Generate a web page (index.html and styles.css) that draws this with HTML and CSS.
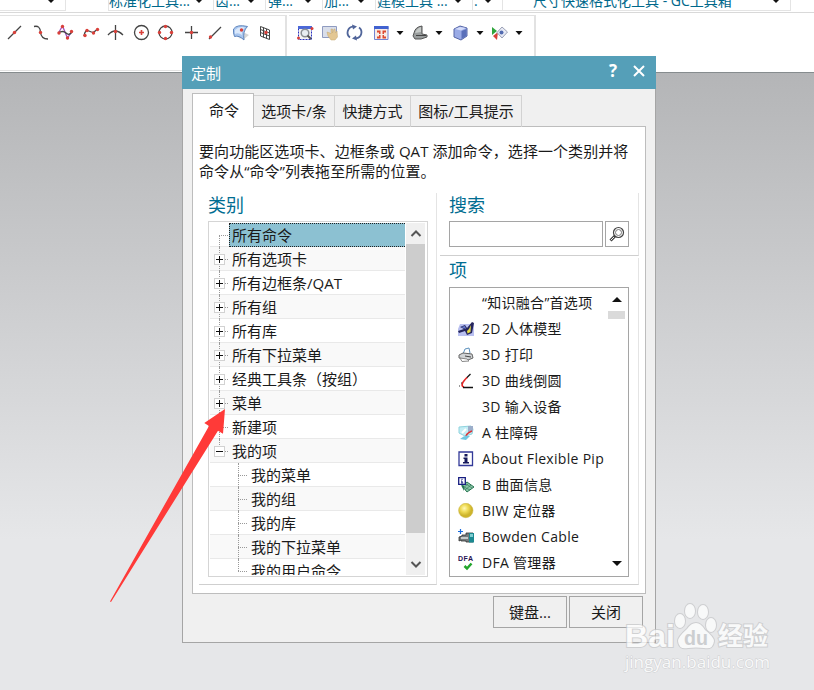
FILE: index.html
```html
<!DOCTYPE html>
<html lang="zh-CN">
<head>
<meta charset="UTF-8">
<meta name="viewport" content="width=device-width, initial-scale=1.0">
<title>定制</title>
<link rel="stylesheet" href="styles.css">
</head>
<body>

  <div class="ribbon">
    <div class="cell c1"><i class="down"></i></div>
    <div class="cell c2"><span>标准化工具...</span><i class="down"></i></div>
    <div class="cell c3"><span>齿...</span><i class="down"></i></div>
    <div class="cell c4"><span>弹...</span><i class="down"></i></div>
    <div class="cell c5"><span>加...</span><i class="down"></i></div>
    <div class="cell c6"><span>建模工具 ...</span><i class="down"></i></div>
    <div class="cell c7"><span>.</span><i class="down"></i></div>
    <div class="cell c8"><span>尺寸快速格式化工具 - GC工具箱</span><i class="down"></i></div>
  </div>

  <div class="toolbar">
    <div class="group curves">
      <svg viewBox="0 0 286 38">
        <g fill="none" stroke="#444" stroke-width="1.3">
          <path d="M9 24L22 11"/>
          <path d="M35 11.500Q41 10 41.500 17Q42 24 49 24"/>
          <path d="M60 17L63.500 11L68.500 23L73 16" stroke="#a050c0"/>
          <path d="M59 18Q64 15 67 18T73 17"/>
          <path d="M85 21Q86 14 90 16T95 17T99 14"/>
          <path d="M109 20Q116 12 124 20M116.500 10V25"/>
          <circle cx="142.500" cy="17.500" r="7"/>
          <circle cx="166.500" cy="17.500" r="6.500"/>
          <path d="M186 17.500H199M192.500 11V24"/>
          <path d="M210 24L222 12"/>
        </g>
        <g fill="#d9403a">
          <circle cx="15.500" cy="17.500" r="1.700"/>
          <circle cx="41.500" cy="17.500" r="1.700"/>
          <circle cx="60" cy="18" r="1.700"/><circle cx="63.500" cy="11.500" r="1.700"/><circle cx="68.500" cy="23" r="1.700"/><circle cx="72.500" cy="16.500" r="1.700"/>
          <circle cx="86" cy="20.500" r="1.700"/><circle cx="88" cy="15.500" r="1.700"/><circle cx="94.500" cy="18" r="1.700"/><circle cx="98.500" cy="14.500" r="1.700"/>
          <circle cx="116.500" cy="16.500" r="1.700"/>
          <path d="M141.700 15h1.600v1.700H145v1.600h-1.700V20h-1.600v-1.700H140v-1.600h1.700z"/>
          <circle cx="166.500" cy="11.500" r="1.700"/><circle cx="160.500" cy="17.500" r="1.700"/><circle cx="172.500" cy="17.500" r="1.700"/><circle cx="166.500" cy="23.500" r="1.700"/>
          <circle cx="192.500" cy="17.500" r="1.700"/>
          <circle cx="211.500" cy="22" r="1.700"/>
        </g>
        <path d="M246 18L250 20L245 24L239 23Z" fill="#d5d5d5"/>
        <path d="M234.500 14Q238 9 248.500 11.500Q243.500 16 245 25Q240 20 235.500 21.500Q234 18 234.500 14Z" fill="#a9c6ef" stroke="#6086bd"/>
        <path d="M236 15Q240 11 246 12.500Q242 16 243 20Q239 17 236 19Z" fill="#dbe9fb"/>
        <circle cx="242.500" cy="15" r="1.700" fill="#d9403a"/>
        <path d="M261.500 11.500L270.500 15V24.500L261.500 21ZM264.500 12.500V22.500M267.500 14V23.500M261.500 14.500L270.500 18M261.500 17.500L270.500 21" fill="none" stroke="#444"/>
        <circle cx="267" cy="17.500" r="1.700" fill="#d9403a"/>
      </svg>
    </div>
    <div class="group views">
      <svg viewBox="0 0 246 38">
        <path d="M10.500 11.500H23.500V24.500H10.500Z" fill="#f4f4f4" stroke="#2830c0" stroke-dasharray="2 1"/>
        <path d="M10 11H24V14H10Z" fill="#4b68d8"/>
        <circle cx="17" cy="18" r="3.800" fill="#e8eef2" stroke="#8a8f94" stroke-width="1.500"/>
        <path d="M19.500 20.500L23 24" stroke="#555" stroke-width="2"/>
        <circle cx="24" cy="13.500" r="1.500" fill="#d9403a"/><circle cx="10.500" cy="23" r="1.500" fill="#d9403a"/>
        <path d="M34.500 11.500H48.500V22.500H34.500Z" fill="#d9deea" stroke="#8f9bc0"/>
        <path d="M39 17L42 18L43 19V14H44.500V18L46 14H47L47.500 18L49 16L49.500 22L47 25H43L40 21Z" fill="#e3c793" stroke="#c4a873" stroke-width=".5"/>
        <g fill="none" stroke="#50659a" stroke-width="1.800">
          <path d="M62 22.500A6 6 0 0 1 65 11.700"/>
          <path d="M71 12.500A6 6 0 0 1 68 23.300"/>
        </g>
        <path d="M64 9.500L69 11.500L65 14.500ZM69 25.500L64 23.500L68 20.500Z" fill="#50659a"/>
        <path d="M86.500 11.500H100V24.500H86.500Z" fill="#f8ece6" stroke="#7384d2"/>
        <path d="M86 11H100.500V14H86Z" fill="#4162d0"/>
        <path d="M89 15.500H92.500V19H91V17.500H89ZM94.500 15.500H98V17.500H96V19H94.500ZM89 21.500H91V20H92.500V23.500H89ZM94.500 20H96V21.500H98V23.500H94.500Z" fill="#dd4a31"/>
        <path d="M108.500 16H115.500L112 20Z" fill="#111"/>
        <path d="M126 18Q127 12 134 11V19L139 20V22L133 24H127L125 21Z" fill="#999d9d" stroke="#555"/>
        <path d="M127 18Q129 13 133 12V17Z" fill="#c6cac8"/><path d="M128 20.500L138 20.500" stroke="#444"/>
        <path d="M147.500 16H154.500L151 20Z" fill="#111"/>
        <path d="M166 14L172 11L179 13V21L173 25L166 22Z" fill="#9aabe6" stroke="#5666a7"/>
        <path d="M167 14L172 12L178 13L173 15.500Z" fill="#d4dcfa"/><path d="M173.500 16L178.500 14V21L173.500 24Z" fill="#5a70ba"/>
        <path d="M188.500 16H195.500L192 20Z" fill="#111"/>
        <path d="M204 12L209 16L204 20Z" fill="#2fa53c"/><path d="M205 21L210 17L209 25Z" fill="#d9403a"/>
        <path d="M209 17.500L214 12L219.500 17L214 23Z" fill="#e7eaf5" stroke="#9aa0b5"/><circle cx="213.500" cy="17.500" r="2" fill="#536bb0"/>
        <path d="M227.500 16H234.500L231 20Z" fill="#111"/>
      </svg>
    </div>
  </div>

  <div class="dialog">
    <div class="title">
      <span>定制</span>
      <b>?</b>
      <svg viewBox="0 0 12 12"><path d="M1 1L11 11M11 1L1 11" stroke="#fff" stroke-width="2"/></svg>
    </div>
    <div class="tabs">
      <div class="tab active">命令</div>
      <div class="tab t2">选项卡/条</div>
      <div class="tab t3">快捷方式</div>
      <div class="tab t4">图标/工具提示</div>
    </div>
    <div class="panel">
      <p>要向功能区选项卡、边框条或 QAT 添加命令，选择一个类别并将<br>命令从“命令”列表拖至所需的位置。</p>
      <div class="columns">
        <div class="left">
          <h2>类别</h2>
          <div class="treebox">
            <ul class="tree">
              <li class="first"><span class="selected">所有命令</span></li>
              <li><i class="box plus"></i><span>所有选项卡</span></li>
              <li><i class="box plus"></i><span>所有边框条/QAT</span></li>
              <li><i class="box plus"></i><span>所有组</span></li>
              <li><i class="box plus"></i><span>所有库</span></li>
              <li><i class="box plus"></i><span>所有下拉菜单</span></li>
              <li><i class="box plus"></i><span>经典工具条（按组）</span></li>
              <li><i class="box plus"></i><span>菜单</span></li>
              <li><span>新建项</span></li>
              <li class="last"><i class="box"></i><span>我的项</span></li>
              <li class="child"><span>我的菜单</span></li>
              <li class="child"><span>我的组</span></li>
              <li class="child"><span>我的库</span></li>
              <li class="child"><span>我的下拉菜单</span></li>
              <li class="child end"><span>我的用户命令</span></li>
            </ul>
            <div class="scroll">
              <svg viewBox="0 0 20 21"><path d="M5.500 13L10 8.500L14.500 13" fill="none" stroke="#555" stroke-width="2"/></svg>
              <div class="thumb"></div>
              <svg viewBox="0 0 20 21"><path d="M5.500 8L10 12.500L14.500 8" fill="none" stroke="#555" stroke-width="2"/></svg>
            </div>
          </div>
        </div>
        <div class="right">
          <div class="search">
            <h2>搜索</h2>
            <div class="search-row">
              <input type="text">
              <button type="button" class="find">
                <svg viewBox="0 0 16 16"><path d="M1.500 14.500L6 10" stroke="#444" stroke-width="3"/><path d="M2 14L5 11" stroke="#eee"/><circle cx="9.500" cy="6.500" r="5" fill="#fff" stroke="#444" stroke-width="1.200"/><circle cx="9.500" cy="6.500" r="3" fill="#fff" stroke="#777"/></svg>
              </button>
            </div>
          </div>
          <div class="items">
            <h2>项</h2>
            <div class="list">
              <ul>
                <li><svg viewBox="0 0 16 16"></svg><span>“知识融合”首选项</span></li>
                <li>
                  <svg viewBox="0 0 16 16"><path d="M2 3H16V15H0V8Z" fill="#b9c0f0"/><path d="M2 6L7 4L9 7L14 1L16 2L14 12L9 14L7 10L1 12L0 10L6 8Z" fill="#26265c"/><path d="M9 10L11 8L13 4L12.500 11L9.500 12.500Z" fill="#e5dc45"/><path d="M3 6L7 5L8 8Z" fill="#647bd1"/></svg>
                  <span>2D 人体模型</span>
                </li>
                <li>
                  <svg viewBox="0 0 16 16"><path d="M5 7L7 2L11 1L12 6L10 8Z" fill="#fff" stroke="#5c91bd"/><path d="M1 8L5 6L14 7L15 11L10 13L1 11Z" fill="#d0d3d5" stroke="#666"/><path d="M2 11L9 12L11 14L4 14.500Z" fill="#fff" stroke="#888"/><path d="M7 9L13 10" stroke="#444"/></svg>
                  <span>3D 打印</span>
                </li>
                <li>
                  <svg viewBox="0 0 16 16"><path d="M12.500 1L8.500 5" stroke="#111" stroke-width="1.300"/><path d="M9 4.500Q1 12.500 6 14" fill="none" stroke="#e32626" stroke-width="1.700"/><path d="M5 14.500H15" stroke="#111" stroke-width="1.500"/><path d="M1 13H2M3 10H4" stroke="#333"/></svg>
                  <span>3D 曲线倒圆</span>
                </li>
                <li><svg viewBox="0 0 16 16"></svg><span>3D 输入设备</span></li>
                <li>
                  <svg viewBox="0 0 16 16"><path d="M1 2L13 1L15 4L14 9L7 11L1 8Z" fill="#c4eef5" stroke="#8fd3de"/><path d="M10 1H15V6L10 8Z" fill="#9caeca"/><path d="M14 6Q9 8 8 11" stroke="#d33" stroke-width="1.500" fill="none"/><path d="M2 14Q7 9 12 11L8 15Z" fill="#70c7e1"/><path d="M4 8L8 4" stroke="#fff" stroke-width="2"/></svg>
                  <span>A 柱障碍</span>
                </li>
                <li>
                  <svg viewBox="0 0 16 16"><path d="M1 1H14.500V14.500H1Z" fill="#fff" stroke="#333a99" stroke-width="1.300"/><path d="M6.500 3H9.500V5.500H6.500ZM5.500 6.500H9.500V11H11V12.500H5V11H6.500V8H5.500Z" fill="#15185b"/></svg>
                  <span>About Flexible Pip</span>
                </li>
                <li>
                  <svg viewBox="0 0 16 16"><path d="M4 9L9 5L16 10L9 15Z" fill="#8cc8aa" stroke="#287552"/><path d="M6 10L12 13M8 7L14 11M7 13L13 8M5 11L10 7" stroke="#387b5b" stroke-width=".7"/><path d="M3 8L6 14V9Z" fill="#287552"/><path d="M.7.700H7.300V7.300H.7Z" fill="#fff" stroke="#171e81" stroke-width="1.300"/><path d="M4 1.800V3M3 4H4V6M3 6H5.200" fill="none" stroke="#171e81"/></svg>
                  <span>B 曲面信息</span>
                </li>
                <li>
                  <svg viewBox="0 0 16 16"><defs><radialGradient id="ball" cx=".4" cy=".35"><stop offset="0" stop-color="#fff8b8"/><stop offset=".5" stop-color="#efdc58"/><stop offset="1" stop-color="#cdb42c"/></radialGradient></defs><circle cx="7.800" cy="7.500" r="7.200" fill="url(#ball)" stroke="#c8b341" stroke-width=".5"/></svg>
                  <span>BIW 定位器</span>
                </li>
                <li>
                  <svg viewBox="0 0 16 16"><path d="M1 8L4 7V6H8V4H15V13H8V12H3V11L1 12Z" fill="#747b7d" stroke="#333" stroke-width=".8"/><path d="M11 4H16V13.500H11Z" fill="#1b8991"/><path d="M3 8H10V10H3Z" fill="#c5caca"/><path d="M12 5H15V8H12Z" fill="#7fced1"/><path d="M2.500 0V5M0 2.500H5" stroke="#176bdf" stroke-width="1.200"/></svg>
                  <span>Bowden Cable</span>
                </li>
                <li>
                  <svg viewBox="0 0 16 16"><text x="0" y="6" class="dfa" textLength="15">DFA</text><path d="M6.500 11L9 13.500L13.500 8.500" fill="none" stroke="#22a52c" stroke-width="2.500"/></svg>
                  <span>DFA 管理器</span>
                </li>
              </ul>
              <div class="listscroll">
                <svg viewBox="0 0 10 5"><path d="M0 5L5 0L10 5Z" fill="#111"/></svg>
                <div class="grip"></div>
                <svg class="bottom" viewBox="0 0 10 5"><path d="M0 0L5 5L10 0Z" fill="#111"/></svg>
              </div>
            </div>
          </div>
        </div>
      </div>
    </div>
    <div class="buttons">
      <button type="button">键盘...</button>
      <button type="button">关闭</button>
    </div>
  </div>

  <svg class="arrow" viewBox="0 0 120 200">
    <path d="M117 4L96.300 18L101 21L2 196.500L3 197L110 25.700L115 28.700Z" fill="#ff3a38"/>
  </svg>

  <svg class="watermark" viewBox="0 0 150 75">
    <g fill="#fff" stroke="#c6c7c9" stroke-width="2" paint-order="stroke">
      <text x="3" y="46" class="logo" textLength="50" lengthAdjust="spacingAndGlyphs">Bai</text>
      <ellipse cx="58" cy="20" rx="5" ry="7"/>
      <ellipse cx="68" cy="10" rx="5" ry="7"/>
      <ellipse cx="81" cy="11" rx="5" ry="7"/>
      <ellipse cx="89" cy="24" rx="5" ry="7"/>
      <path d="M74 22Q79 22 83 29Q92 36 92 40Q91 49 82 47Q74 46 66 47Q57 49 56 40Q56 36 65 28Q69 22 74 22Z"/>
      <text x="96" y="44" class="jy" textLength="50">经验</text>
      <text x="3" y="67" class="url" textLength="145" lengthAdjust="spacingAndGlyphs">jingyan.baidu.com</text>
    </g>
    <text x="62" y="44" class="du" textLength="24" lengthAdjust="spacingAndGlyphs">du</text>
  </svg>

</body>
</html>
```

FILE: styles.css
```css
* {
  box-sizing: border-box;
}

body {
  margin: 0;
  height: 690px;
  position: relative;
  overflow: hidden;
  font-family: "Open Sans", "Noto Sans CJK SC", sans-serif;
  font-size: 15px;
  color: #1a1a1a;
  background: linear-gradient(#b4b5b7 72px, #e6e7e9 540px);
}

svg {
  display: block;
  flex: none;
}

ul, h2, p {
  margin: 0;
  padding: 0;
  list-style: none;
  font-weight: normal;
}

/* ribbon strip, cut off by the top of the window */
.ribbon {
  display: flex;
  height: 13px;
  background: #fff;
  border-bottom: 1px solid #d9d9d9;
}

.cell {
  display: flex;
  justify-content: space-between;
  height: 11px;
  overflow: hidden;
  color: #00688b;
  border-right: 1px solid #e4e4e4;
  border-bottom: 1px solid #e4e4e4;
  white-space: nowrap;
}

.cell span {
  font-size: 14px;
  line-height: 20px;
  margin-top: -9px;
}

.down {
  border: 3px solid transparent;
  border-top: 3px solid #111;
  height: 3px;
}

.c1 { width: 66px; padding-left: 48px; justify-content: flex-start; }
.c2 { width: 106px; margin-left: 42px; padding: 0 11px 0 0; border-left: 1px solid #e4e4e4; }
.c3 { width: 52px; padding: 0 11px 0 1px; }
.c4 { width: 57px; padding: 0 11px 0 2px; }
.c5 { width: 53px; padding: 0 11px 0 1px; }
.c6 { width: 97px; padding: 0 11px 0 1px; }
.c7 { width: 30px; padding: 0 11px 0 1px; }
.c8 { width: 288px; padding: 0 11px 0 30px; }

.toolbar {
  display: flex;
  gap: 2px;
  height: 60px;
  padding-top: 2px;
  background: #fff;
  border-bottom: 1px solid #868c8e;
}

.group {
  height: 56px;
  border: 1px solid #e2e2e2;
  border-left: 0;
  border-right-width: 2px;
}

.curves {
  width: 287px;
}

.curves svg {
  width: 286px;
  height: 38px;
  margin: -1px 0 0 -1px;
}

.views {
  width: 247px;
}

.views svg {
  width: 246px;
  height: 38px;
  margin: -1px 0 0 -1px;
}

.dialog {
  position: absolute;
  left: 182px;
  top: 56px;
  width: 474px;
  height: 587px;
  background: #f0f0f0;
  border: 1px solid #a5a5a5;
  border-top: 0;
}

.title {
  display: flex;
  align-items: center;
  height: 33px;
  margin: 0 -1px;
  padding: 0 11px 0 9px;
  color: #fff;
  background: #559fb8;
}

.title span {
  flex: 1;
}

.title b {
  font-size: 17px;
  line-height: 20px;
  margin: -4px 16px 0 0;
}

.title svg {
  width: 12px;
  height: 12px;
  margin-top: -4px;
}

.tabs {
  display: flex;
  align-items: flex-end;
  height: 38px;
  padding: 4px 0 0 9px;
}

.tab {
  height: 32px;
  line-height: 30px;
  text-align: center;
  border: 1px solid #d2d2d2;
  border-left: 0;
  border-bottom: 0;
}

.tab.active {
  position: relative;
  z-index: 1;
  width: 62px;
  height: 35px;
  margin-bottom: -1px;
  line-height: 32px;
  background: #fff;
  border: 1px solid #bdbdbd;
  border-bottom: 0;
  padding-left: 2px;
}

.t2 { width: 81px; }
.t3 { width: 76px; }
.t4 { width: 111px; }

.panel {
  width: 454px;
  height: 468px;
  margin: -1px 0 0 9px;
  padding: 14px 6px 0 6px;
  background: #fff;
  border: 1px solid #bdbdbd;
}

.panel p {
  line-height: 20px;
  height: 52px;
  letter-spacing: .07px;
  white-space: nowrap;
}

.columns {
  display: flex;
  gap: 3px;
}

h2 {
  font-size: 18px;
  line-height: 24px;
  height: 28px;
  color: #006d91;
}

.left {
  width: 238px;
  height: 392px;
  padding-left: 9px;
  border-right: 1px solid #e4e4e4;
  border-bottom: 1px solid #cfcfcf;
}

.treebox {
  display: flex;
  width: 220px;
  height: 356px;
  padding: 1px;
  border: 1px solid #d5d5d5;
  overflow: hidden;
}

.tree {
  width: 195px;
  height: 352px;
  overflow: hidden;
}

.tree li {
  position: relative;
  display: flex;
  height: 24px;
  line-height: 24px;
  padding-left: 19px;
  border-bottom: 1px solid #e9e9e9;
}

.tree li:nth-child(even) {
  background: #f9f9f9;
}

.tree span {
  padding-left: 3px;
  white-space: nowrap;
}

/* dotted connector lines */
.tree li::before {
  content: "";
  position: absolute;
  left: 9px;
  top: 0;
  height: 24px;
  border-left: 1px dotted #999;
}

.tree li::after {
  content: "";
  position: absolute;
  left: 9px;
  top: 12px;
  width: 9px;
  border-top: 1px dotted #999;
}

.tree li.first::before {
  top: 12px;
  height: 12px;
}

.tree li.last::before {
  height: 12px;
}

.tree li.child {
  padding-left: 38px;
}

.tree li.child::before,
.tree li.child::after {
  left: 28px;
}

.tree li.end::before {
  height: 12px;
}

.tree .selected {
  flex: 1;
  height: 24px;
  line-height: 22px;
  padding-left: 2px;
  background: #8cc1d2;
  border: 1px dotted #222;
  border-right: 0;
}

.box {
  position: absolute;
  z-index: 1;
  left: 4px;
  top: 7px;
  width: 11px;
  height: 11px;
  border: 1px solid #d2d2d2;
  background: linear-gradient(#111, #111) center / 7px 1px no-repeat, #fff;
}

.plus {
  background: linear-gradient(#111, #111) center / 7px 1px no-repeat, linear-gradient(#111, #111) center / 1px 7px no-repeat, #fff;
}

.scroll {
  width: 19px;
  height: 352px;
  margin-left: 1px;
  background: #f0f0f0;
}

.scroll svg {
  width: 20px;
  height: 21px;
}

.thumb {
  height: 289px;
  margin-bottom: 21px;
  background: #cdcdcd;
}

.right {
  width: 199px;
}

.search {
  height: 63px;
  padding-left: 9px;
  border-right: 1px solid #e4e4e4;
  border-bottom: 1px solid #cfcfcf;
}

.search-row {
  display: flex;
  gap: 2px;
}

.search input {
  width: 154px;
  height: 26px;
  border: 1px solid #a5a5a5;
  padding: 0;
}

.find {
  width: 24px;
  height: 26px;
  padding: 0 3px;
  background: #fff;
  border: 1px solid #a5a5a5;
}

.find svg {
  width: 16px;
  height: 16px;
}

.items {
  height: 327px;
  margin-top: 2px;
  padding: 0 0 0 9px;
  border-right: 1px solid #e4e4e4;
  border-bottom: 1px solid #cfcfcf;
}

.items h2 {
  height: 29px;
}

.list {
  display: flex;
  width: 180px;
  height: 290px;
  padding: 2px 3px 0 8px;
  border: 1px solid #a5a5a5;
}

.list ul {
  width: 148px;
  overflow: hidden;
}

.list li {
  display: flex;
  align-items: center;
  gap: 8px;
  height: 26px;
  font-size: 14px;
  letter-spacing: .3px;
  white-space: nowrap;
}

.list li svg {
  width: 16px;
  height: 16px;
}

.list li span {
  margin-top: -2px;
}

.dfa {
  font: bold 7px "Liberation Sans", sans-serif;
  letter-spacing: 0;
  fill: #2a1454;
}

.listscroll {
  display: flex;
  flex-direction: column;
  align-items: center;
  width: 17px;
  margin-left: 2px;
  padding: 7px 0 10px;
}

.listscroll svg {
  width: 10px;
  height: 5px;
}

.grip {
  width: 17px;
  height: 8px;
  margin-top: 9px;
  background: #dadada;
}

.listscroll .bottom {
  margin-top: auto;
}

.buttons {
  display: flex;
  justify-content: flex-end;
  gap: 2px;
  padding: 2px 12px 0 0;
}

.buttons button {
  width: 74px;
  height: 32px;
  padding: 0 0 2px;
  font: inherit;
  color: #1a1a1a;
  background: #f0f0f0;
  border: 1px solid #a5a5a5;
}

.arrow {
  position: absolute;
  left: 108px;
  top: 405px;
  width: 120px;
  height: 200px;
}

.watermark {
  position: absolute;
  left: 622px;
  top: 601px;
  width: 150px;
  height: 75px;
  opacity: .75;
}

.logo {
  font: bold 31px "Liberation Sans", sans-serif;
}

.jy {
  font: bold 25px "Noto Sans CJK SC", sans-serif;
}

.url {
  font: 17px "Open Sans", sans-serif;
  stroke-width: 1px;
}

.du {
  font: bold 21px "Liberation Sans", sans-serif;
  fill: #c4c6c8;
}
```
